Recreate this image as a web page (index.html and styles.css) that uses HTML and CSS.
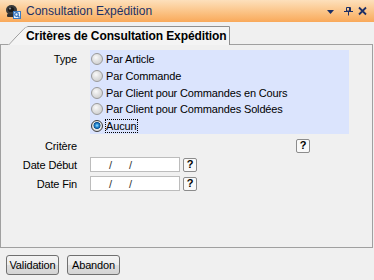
FILE: index.html
```html
<!DOCTYPE html>
<html lang="fr">
<head>
<meta charset="utf-8">
<title>Consultation Expédition</title>
<link rel="stylesheet" href="styles.css">
</head>
<body>
<div class="titlebar">
  <svg class="app-icon" width="17" height="17" viewBox="0 0 17 17">
    <ellipse cx="7.5" cy="7" rx="5.5" ry="5" fill="#3a3a3a"/>
    <ellipse cx="7" cy="6.5" rx="3" ry="2.6" fill="#1a1a1a"/>
    <ellipse cx="6" cy="5.5" rx="1.2" ry="1" fill="#8a8a8a"/>
    <rect x="3" y="11" width="8" height="3" rx="1" fill="#2e2e2e"/>
    <rect x="9.5" y="8.5" width="7" height="7" fill="#e8f2fc" stroke="#3b7bc4"/>
    <circle cx="12.5" cy="11.5" r="1.8" fill="none" stroke="#2c6cb8" stroke-width="1.2"/>
    <path d="M13.8 12.8 L15.5 14.5" stroke="#2c6cb8" stroke-width="1.3"/>
  </svg>
  <span class="title">Consultation Expédition</span>
  <svg class="tb-ctrls" width="41" height="22" viewBox="0 0 41 22">
    <path d="M0 10 H7 L3.5 14 Z" fill="#1c2f66"/>
    <path d="M19.5 7.5 H23.5 V11 H19.5 Z" fill="none" stroke="#1c2f66"/>
    <path d="M22.5 7 V11" stroke="#1c2f66" stroke-width="1"/>
    <path d="M17 11.5 H26" stroke="#1c2f66"/>
    <path d="M21.5 11.5 V15.5" stroke="#1c2f66"/>
    <path d="M32 7.5 L39 14.5 M39 7.5 L32 14.5" stroke="#1c2f66" stroke-width="1.8"/>
  </svg>
</div>

<div class="tabstrip">
  <div class="tab">
    <svg class="tab-outline" width="222" height="19" viewBox="0 0 222 19">
      <path d="M0.5 19 L16 2.5 Q17.5 0.5 20 0.5 L221.5 0.5 L221.5 19" fill="none" stroke="#8f8f8f"/>
    </svg>
    <span class="tab-label">Critères de Consultation Expédition</span>
  </div>
</div>

<div class="panel">
  <div class="form">
    <div class="label type-label">Type</div>
    <div class="radios">
      <div class="radio-row"><span class="radio"></span><span>Par Article</span></div>
      <div class="radio-row"><span class="radio"></span><span>Par Commande</span></div>
      <div class="radio-row"><span class="radio"></span><span>Par Client pour Commandes en Cours</span></div>
      <div class="radio-row"><span class="radio"></span><span>Par Client pour Commandes Soldées</span></div>
      <div class="radio-row"><span class="radio checked"></span><span class="focus">Aucun</span></div>
    </div>
  </div>

  <div class="form fields">
    <div class="label">Critère</div>
    <div class="control"><span class="spacer"></span><span class="help">?</span></div>

    <div class="label">Date Début</div>
    <div class="control"><span class="date"><span class="s1">/</span><span class="s2">/</span></span><span class="help">?</span></div>

    <div class="label">Date Fin</div>
    <div class="control"><span class="date"><span class="s1">/</span><span class="s2">/</span></span><span class="help">?</span></div>
  </div>
</div>

<div class="actions">
  <button class="btn">Validation</button>
  <button class="btn">Abandon</button>
</div>
</body>
</html>
```

FILE: styles.css
```css
html, body {
  margin: 0;
  padding: 0;
}
body {
  width: 374px;
  height: 280px;
  overflow: hidden;
  background: #f0f0f0;
  font-family: "Liberation Sans", Arial, sans-serif;
  font-size: 11px;
  letter-spacing: -0.15px;
  color: #000;
}

.titlebar {
  height: 22px;
  display: flex;
  align-items: center;
  padding-left: 4px;
  background: linear-gradient(#fde0bc, #fbc385 55%, #f9a95a);
  letter-spacing: 0;
}
.app-icon {
  margin-right: 5px;
  flex: none;
}
.title {
  flex: 1;
  font-size: 12px;
  color: #1c3166;
}
.tb-ctrls {
  flex: none;
  margin-right: 6px;
}

.tabstrip {
  height: 22px;
  display: flex;
  align-items: flex-end;
  padding-left: 8px;
}
.tab {
  position: relative;
  z-index: 1;
  width: 222px;
  height: 19px;
  box-sizing: border-box;
  margin-bottom: -1px;
  padding-left: 18px;
  display: flex;
  align-items: center;
  background: #f4f4f4;
  clip-path: polygon(0 100%, 16px 2px, 20px 0, 100% 0, 100% 100%);
}
.tab-outline {
  position: absolute;
  left: 0;
  top: 0;
}
.tab-label {
  font-weight: bold;
  font-size: 12px;
  letter-spacing: -0.1px;
  white-space: nowrap;
  padding-top: 1px;
}

.panel {
  width: 373px;
  height: 204px;
  box-sizing: border-box;
  border: 1px solid #a0a0a0;
  padding-top: 5px;
}

.form {
  display: grid;
  grid-template-columns: 76px auto;
  column-gap: 13px;
  justify-content: start;
}
.label {
  text-align: right;
  white-space: nowrap;
}
.type-label {
  padding-top: 1px;
  line-height: 16.67px;
}

.radios {
  width: 259px;
  height: 84px;
  box-sizing: border-box;
  padding-top: 1px;
  background: #dbe4fd;
}
.radio-row {
  height: 16.67px;
  display: flex;
  align-items: center;
  white-space: nowrap;
}
.radio {
  flex: none;
  width: 12px;
  height: 12px;
  box-sizing: border-box;
  margin-left: 1px;
  margin-right: 3px;
  border-radius: 50%;
  border: 1px solid #9a9a9a;
  background: radial-gradient(circle at 40% 35%, #fafafa 0, #e2e2e2 40%, #c6c6c6 100%);
}
.radio.checked {
  border-color: #3c3c3c;
  background: radial-gradient(circle at 50% 45%, #a6e0ff 0, #2b93dc 1.6px, #0f4f91 3.2px, #e6e6e6 3.8px, #d0d0d0 100%);
}
.focus {
  outline: 1px dotted #000;
  outline-offset: 0;
  padding: 0 1px 0 0;
  line-height: 12px;
}

.fields {
  margin-top: 2px;
  grid-auto-rows: 19px;
  align-items: center;
}
.control {
  display: flex;
  align-items: center;
}
.spacer {
  width: 206px;
}
.date {
  width: 90px;
  height: 15px;
  box-sizing: border-box;
  border: 1px solid #bcbcbc;
  background: #fff;
  display: flex;
  align-items: center;
  color: #333;
  font-size: 11px;
}
.s1 {
  margin-left: 18px;
}
.s2 {
  margin-left: 17px;
}
.date + .help {
  margin-left: 3px;
}
.help {
  width: 14px;
  height: 14px;
  box-sizing: border-box;
  border: 1px solid #8c8c8c;
  border-radius: 2px;
  background: #f9f9f9;
  display: flex;
  align-items: center;
  justify-content: center;
  font-weight: bold;
  font-size: 11px;
  line-height: 1;
}

.actions {
  display: flex;
  gap: 8px;
  padding: 7px 0 0 6px;
}
.btn {
  width: 53px;
  height: 20px;
  padding: 0;
  margin: 0;
  border: 1px solid #707070;
  border-radius: 3px;
  background: linear-gradient(#f4f4f4, #ececec 50%, #dedede 51%, #d4d4d4);
  font-family: "Liberation Sans", Arial, sans-serif;
  font-size: 11px;
  letter-spacing: -0.15px;
  color: #000;
}
```
